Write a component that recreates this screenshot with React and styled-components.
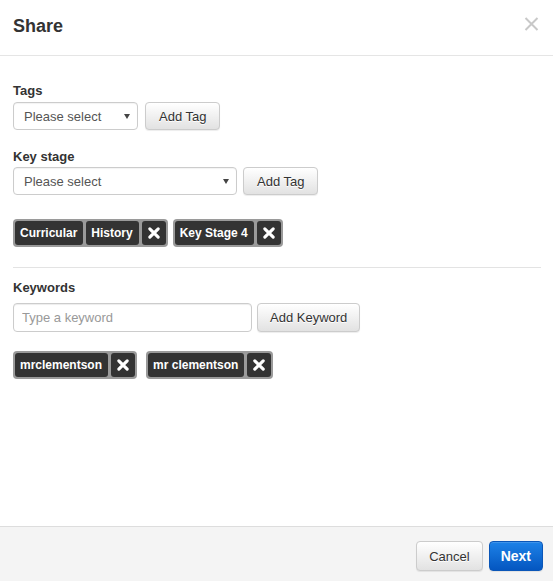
import React from "react";
import styled, { createGlobalStyle } from "styled-components";

const Global = createGlobalStyle`
  html, body { margin: 0; padding: 0; background: #fff; }
  body {
    font-family: "Liberation Sans", Arial, Helvetica, sans-serif;
    font-size: 13px;
    color: #333;
  }
  * { box-sizing: border-box; }
`;

const Modal = styled.div`
  width: 553px;
  height: 581px;
  display: flex;
  flex-direction: column;
  background: #fff;
`;

const Header = styled.div`
  display: flex;
  justify-content: space-between;
  align-items: flex-start;
  padding: 13px 14px 16px 13px;
  border-bottom: 1px solid #e5e5e5;
`;

const Title = styled.h4`
  margin: 0;
  font-size: 18px;
  line-height: 26px;
  font-weight: bold;
  color: #333;
`;

const CloseButton = styled.button`
  border: 0;
  background: transparent;
  padding: 0;
  margin-top: 4px;
  cursor: pointer;
  display: flex;
  svg { display: block; }
`;

const Body = styled.div`
  flex: 1;
  padding: 25px 12px 0 13px;
`;

const Field = styled.div`
  margin-bottom: ${(p) => p.$mb || 0}px;
`;

const Label = styled.label`
  display: block;
  font-weight: bold;
  font-size: 13px;
  line-height: 19px;
  margin-bottom: ${(p) => p.$mb}px;
  color: #333;
`;

const Row = styled.div`
  display: flex;
  align-items: center;
  gap: ${(p) => p.$gap}px;
`;

const SelectWrap = styled.div`
  position: relative;
  width: ${(p) => p.$w}px;
  height: 28px;
`;

const Select = styled.select`
  appearance: none;
  -webkit-appearance: none;
  width: 100%;
  height: 100%;
  border: 1px solid #ccc;
  border-radius: 4px;
  background: #fff;
  padding: 0 20px 0 10px;
  font-family: inherit;
  font-size: 13px;
  color: #555;
  box-shadow: inset 0 1px 1px rgba(0, 0, 0, 0.05);
`;

const Caret = styled.span`
  position: absolute;
  right: 8px;
  top: 12px;
  width: 0;
  height: 0;
  border-left: 3px solid transparent;
  border-right: 3px solid transparent;
  border-top: 5px solid #444;
  pointer-events: none;
`;

const Button = styled.button`
  height: ${(p) => p.$h}px;
  padding: 0 ${(p) => p.$px}px;
  border: 1px solid #ccc;
  border-radius: 4px;
  background-image: linear-gradient(to bottom, #fff 0%, #e2e2e2 100%);
  color: #333;
  font-family: inherit;
  font-size: 13px;
  text-shadow: 0 1px 0 #fff;
  box-shadow: inset 0 1px 0 rgba(255, 255, 255, 0.15), 0 1px 1px rgba(0, 0, 0, 0.075);
  cursor: pointer;
  white-space: nowrap;
`;

const PrimaryButton = styled(Button)`
  border-color: #0a56b8;
  background-image: linear-gradient(to bottom, #1d82e8 0%, #0456c0 100%);
  color: #fff;
  font-weight: bold;
  font-size: 14px;
  text-shadow: none;
`;

const Input = styled.input`
  width: 239px;
  height: 29px;
  border: 1px solid #ccc;
  border-radius: 4px;
  padding: 0 8px;
  font-family: inherit;
  font-size: 13px;
  color: #555;
  box-shadow: inset 0 1px 1px rgba(0, 0, 0, 0.075);
  &::placeholder { color: #999; }
`;

const ChipRow = styled.div`
  display: flex;
  gap: ${(p) => p.$gap}px;
  margin-top: ${(p) => p.$mt}px;
`;

const ChipGroup = styled.div`
  display: flex;
  gap: 3px;
  padding: 2px;
  background: #9a9a9a;
  border-radius: 4px;
`;

const Chip = styled.span`
  height: 24px;
  line-height: 24px;
  padding: 0 6px 0 5px;
  background: #333;
  color: #fff;
  font-weight: bold;
  font-size: 12px;
  border-radius: 3px;
  white-space: nowrap;
`;

const ChipRemove = styled.button`
  width: 24px;
  height: 24px;
  border: 0;
  padding: 0;
  background: #333;
  border-radius: 3px;
  display: flex;
  align-items: center;
  justify-content: center;
  cursor: pointer;
`;

const Divider = styled.hr`
  border: 0;
  border-top: 1px solid #e3e3e3;
  margin: 20px 0 10px;
  width: 528px;
`;

const Footer = styled.div`
  display: flex;
  justify-content: flex-end;
  gap: 6px;
  padding: 14px 10px 10px;
  border-top: 1px solid #ddd;
  background: #f4f4f4;
`;

const XIcon = () => (
  <svg width="14" height="14" viewBox="0 0 16 16">
    <path d="M3.2 3.2 L12.8 12.8 M12.8 3.2 L3.2 12.8" stroke="#fff" strokeWidth="3.6" strokeLinecap="round" />
  </svg>
);

const CloseIcon = () => (
  <svg width="15" height="14" viewBox="0 0 15 14">
    <path d="M1.5 1 L13.5 13 M13.5 1 L1.5 13" stroke="#c8c8c8" strokeWidth="2" />
  </svg>
);

const TagChips = ({ items }) => (
  <ChipGroup>
    {items.map((t) => (
      <Chip key={t}>{t}</Chip>
    ))}
    <ChipRemove aria-label="Remove">
      <XIcon />
    </ChipRemove>
  </ChipGroup>
);

export default function App() {
  return (
    <>
      <Global />
      <Modal>
        <Header>
          <Title>Share</Title>
          <CloseButton aria-label="Close">
            <CloseIcon />
          </CloseButton>
        </Header>
        <Body>
          <Field $mb={17}>
            <Label $mb={2}>Tags</Label>
            <Row $gap={7}>
              <SelectWrap $w={125}>
                <Select defaultValue="">
                  <option value="">Please select</option>
                </Select>
                <Caret />
              </SelectWrap>
              <Button $h={28} $px={13}>Add Tag</Button>
            </Row>
          </Field>
          <Field>
            <Label $mb={1}>Key stage</Label>
            <Row $gap={6}>
              <SelectWrap $w={224}>
                <Select defaultValue="">
                  <option value="">Please select</option>
                </Select>
                <Caret />
              </SelectWrap>
              <Button $h={28} $px={13}>Add Tag</Button>
            </Row>
          </Field>
          <ChipRow $gap={5} $mt={24}>
            <TagChips items={["Curricular", "History"]} />
            <TagChips items={["Key Stage 4"]} />
          </ChipRow>
          <Divider />
          <Field>
            <Label $mb={6}>Keywords</Label>
            <Row $gap={5}>
              <Input placeholder="Type a keyword" />
              <Button $h={29} $px={12}>Add Keyword</Button>
            </Row>
          </Field>
          <ChipRow $gap={9} $mt={19}>
            <TagChips items={["mrclementson"]} />
            <TagChips items={["mr clementson"]} />
          </ChipRow>
        </Body>
        <Footer>
          <Button $h={30} $px={12}>Cancel</Button>
          <PrimaryButton $h={30} $px={11}>Next</PrimaryButton>
        </Footer>
      </Modal>
    </>
  );
}
